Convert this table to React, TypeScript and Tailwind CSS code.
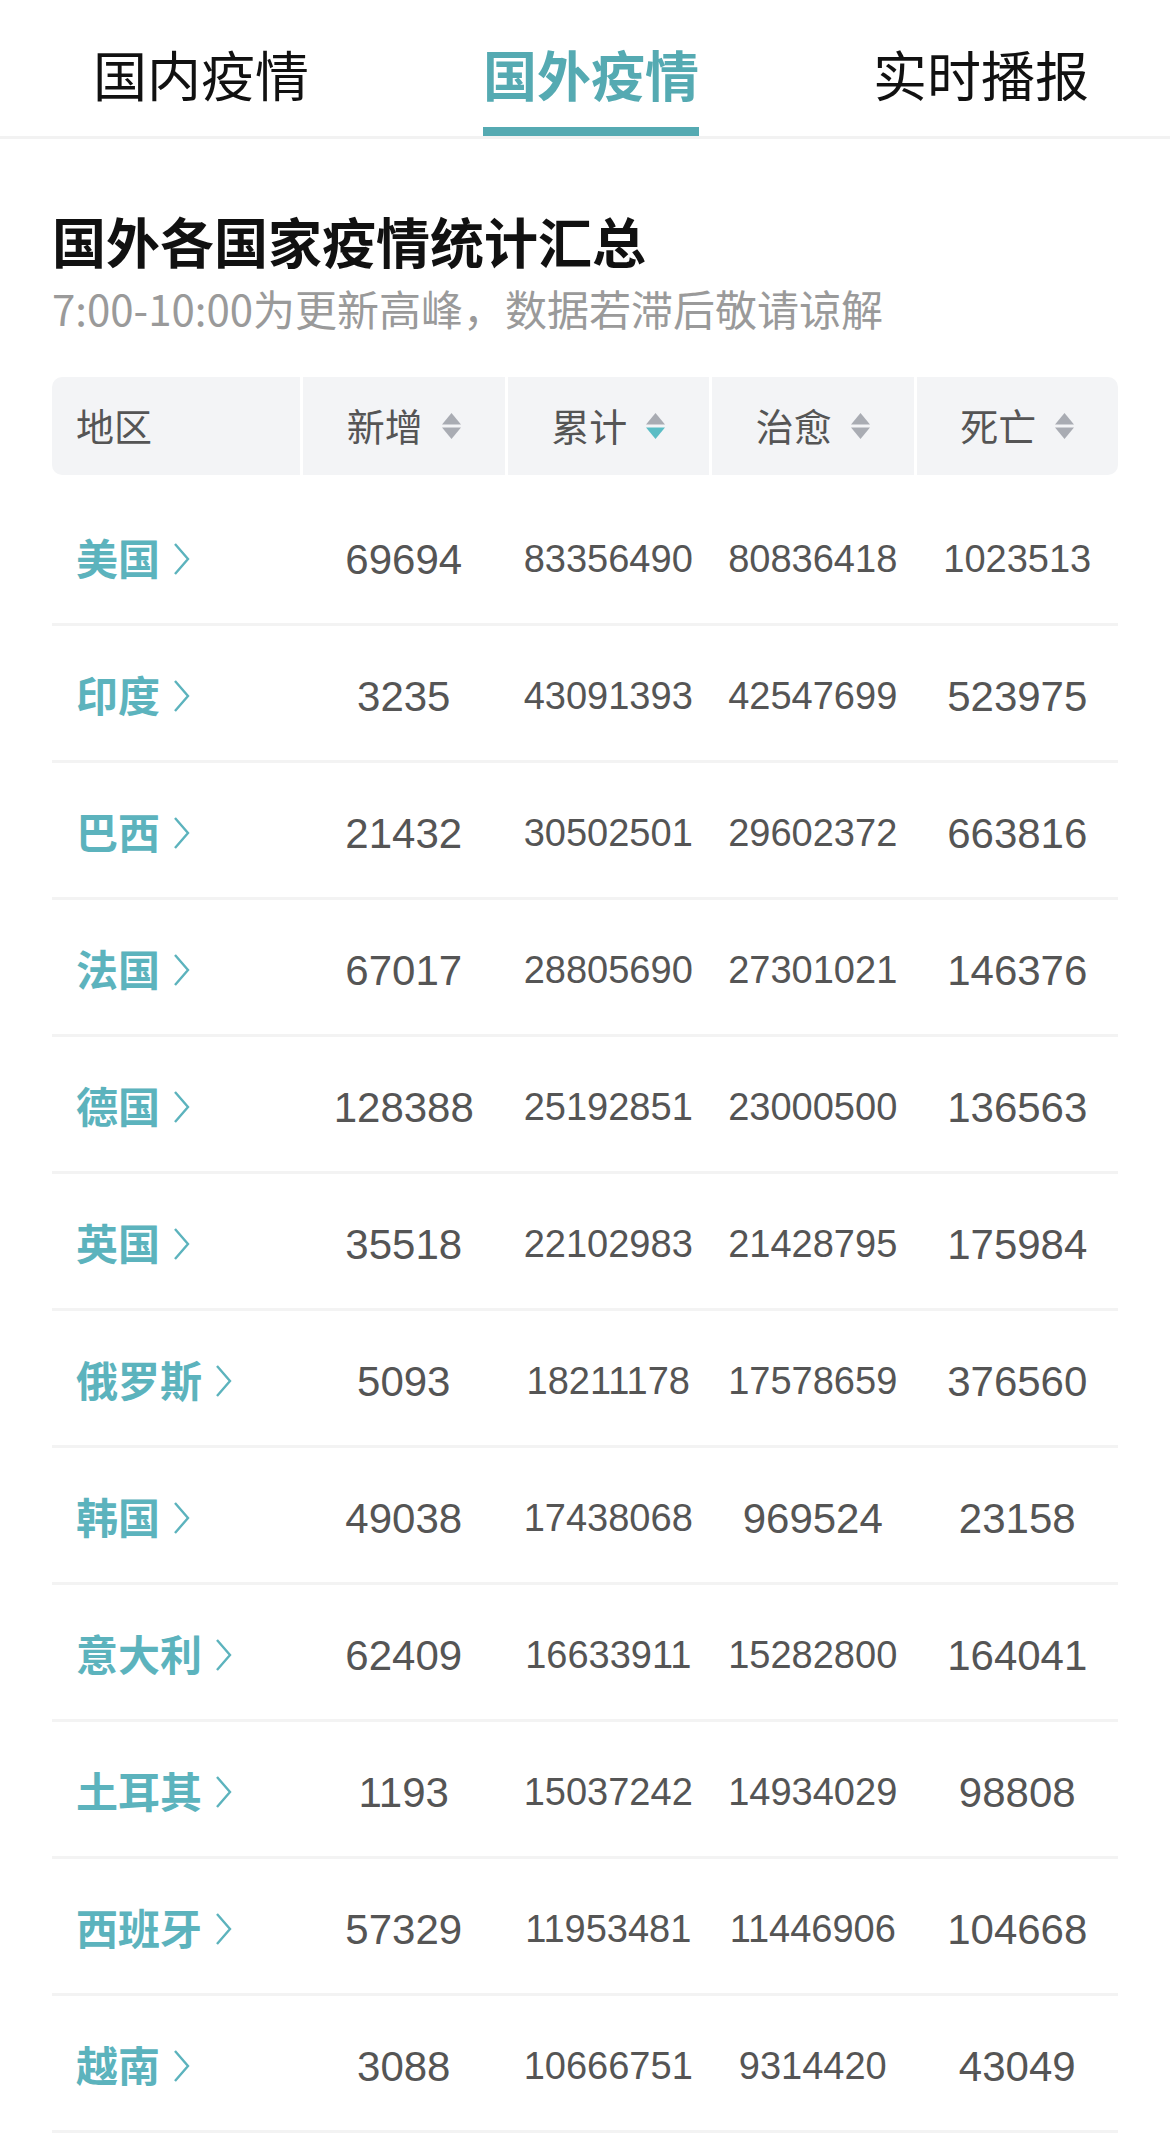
import React from "react"

const cjk = { fontFamily: '"Noto Sans CJK SC", "Noto Sans", sans-serif' }
const num = { fontFamily: '"Liberation Sans", Arial, sans-serif' }

const tabs = [
  { label: "国内疫情", active: false },
  { label: "国外疫情", active: true },
  { label: "实时播报", active: false },
]

const headers = [
  { label: "新增", sorted: false },
  { label: "累计", sorted: true },
  { label: "治愈", sorted: false },
  { label: "死亡", sorted: false },
]

const rows = [
  { name: "美国", add: "69694", total: "83356490", cured: "80836418", dead: "1023513" },
  { name: "印度", add: "3235", total: "43091393", cured: "42547699", dead: "523975" },
  { name: "巴西", add: "21432", total: "30502501", cured: "29602372", dead: "663816" },
  { name: "法国", add: "67017", total: "28805690", cured: "27301021", dead: "146376" },
  { name: "德国", add: "128388", total: "25192851", cured: "23000500", dead: "136563" },
  { name: "英国", add: "35518", total: "22102983", cured: "21428795", dead: "175984" },
  { name: "俄罗斯", add: "5093", total: "18211178", cured: "17578659", dead: "376560" },
  { name: "韩国", add: "49038", total: "17438068", cured: "969524", dead: "23158" },
  { name: "意大利", add: "62409", total: "16633911", cured: "15282800", dead: "164041" },
  { name: "土耳其", add: "1193", total: "15037242", cured: "14934029", dead: "98808" },
  { name: "西班牙", add: "57329", total: "11953481", cured: "11446906", dead: "104668" },
  { name: "越南", add: "3088", total: "10666751", cured: "9314420", dead: "43049" },
]

function SortIcon({ active }: { active: boolean }) {
  return (
    <svg width="19" height="26" viewBox="0 0 19 26" className="mt-[3px]">
      <path d="M9.5 0 L19 11.5 L0 11.5 Z" fill="#a9acb3" />
      <path d="M0 14.5 L19 14.5 L9.5 26 Z" fill={active ? "#5bbdc5" : "#a9acb3"} />
    </svg>
  )
}

function Chevron() {
  return (
    <svg width="17" height="34" viewBox="0 0 17 34" className="ml-[13px] mt-[5px]">
      <path d="M2 2 L15 17 L2 32" fill="none" stroke="#5cb3bd" strokeWidth="2.4" />
    </svg>
  )
}

function NumCell({ value }: { value: string }) {
  return (
    <div
      className={`flex items-center justify-center pt-[6px] text-[#555555] ${value.length >= 7 ? "text-[38px]" : "text-[42px]"}`}
      style={num}
    >
      {value}
    </div>
  )
}

export default function App() {
  return (
    <div className="w-[1170px] min-h-[2138px] bg-white" style={cjk}>
      {/* Tabs */}
      <div className="flex h-[139px] border-b-[3px] border-[#f2f2f2]">
        {tabs.map((tab) => (
          <div key={tab.label} className="flex-1 flex justify-center pl-[12px]">
            <div className="flex flex-col items-center pt-[47px]">
              <span
                className={`text-[54px] leading-[54px] ${tab.active ? "text-[#55aab2] font-semibold" : "text-[#111111]"}`}
              >
                {tab.label}
              </span>
              <div className={`mt-[26px] h-[9px] w-[216px] ${tab.active ? "bg-[#55aab2]" : "bg-transparent"}`} />
            </div>
          </div>
        ))}
      </div>

      <div className="px-[52px]">
        {/* Title */}
        <h1 className="mt-[70px] text-[54px] leading-[64px] font-bold text-[#111111]">国外各国家疫情统计汇总</h1>
        <p className="mt-[10px] text-[42px] leading-[50px] text-[#9a9a9a]">7:00-10:00为更新高峰，数据若滞后敬请谅解</p>

        {/* Table header */}
        <div className="mt-[44px] grid grid-cols-[248px_repeat(4,1fr)] gap-[3px] h-[98px] rounded-[10px] overflow-hidden">
          <div className="bg-[#f3f4f6] flex items-center pl-[24px] pb-[4px] text-[38px] text-[#555555]">地区</div>
          {headers.map((h) => (
            <div
              key={h.label}
              className="bg-[#f3f4f6] flex items-center justify-center gap-[19px] pb-[4px] text-[38px] text-[#555555]"
            >
              <span>{h.label}</span>
              <SortIcon active={h.sorted} />
            </div>
          ))}
        </div>

        {/* Rows */}
        <div className="mt-[14px]">
          {rows.map((r) => (
            <div
              key={r.name}
              className="grid grid-cols-[248px_repeat(4,1fr)] gap-[3px] h-[137px] border-b-[3px] border-[#f3f3f3]"
            >
              <div className="flex items-center pl-[24px] text-[42px] font-semibold text-[#5cb3bd]">
                <span>{r.name}</span>
                <Chevron />
              </div>
              <NumCell value={r.add} />
              <NumCell value={r.total} />
              <NumCell value={r.cured} />
              <NumCell value={r.dead} />
            </div>
          ))}
        </div>
      </div>
    </div>
  )
}
